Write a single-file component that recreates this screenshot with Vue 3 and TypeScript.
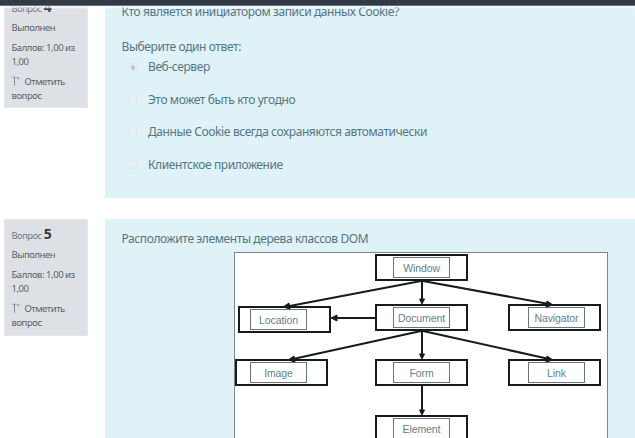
<script setup lang="ts">
interface DomNode {
  label: string
  x: number
  y: number
  slotX: number
  slotY: number
}

interface Arrow {
  line: string
  head: string
}

const answers: { text: string; checked: boolean }[] = [
  { text: 'Веб-сервер', checked: true },
  { text: 'Это может быть кто угодно', checked: false },
  { text: 'Данные Cookie всегда сохраняются автоматически', checked: false },
  { text: 'Клиентское приложение', checked: false },
]

const nodes: DomNode[] = [
  { label: 'Window', x: 140, y: 0.5, slotX: 16, slotY: 1 },
  { label: 'Location', x: 3, y: 53, slotX: 10, slotY: 1 },
  { label: 'Document', x: 140, y: 51, slotX: 16, slotY: 1 },
  { label: 'Navigator', x: 273, y: 51, slotX: 18, slotY: 1 },
  { label: 'Image', x: 0, y: 106, slotX: 13, slotY: 1 },
  { label: 'Form', x: 140, y: 106, slotX: 16, slotY: 1 },
  { label: 'Link', x: 273, y: 106, slotX: 18, slotY: 1 },
  { label: 'Element', x: 140, y: 162, slotX: 16, slotY: 1 },
]

const arrows: Arrow[] = [
  { line: 'M186 28L52 53.5', head: 'M48 54l6-4 1 6z' },
  { line: 'M187 28V48', head: 'M187 51l-2.5-5h5z' },
  { line: 'M188 28L314 51', head: 'M318 52l-6-4-1 6z' },
  { line: 'M140 65H101', head: 'M96 65l6-3v6z' },
  { line: 'M186 78L58 106', head: 'M53 107l6-4 1 6z' },
  { line: 'M187 78V103', head: 'M187 106l-2.5-5h5z' },
  { line: 'M188 78L314 106', head: 'M318 107l-6-4-1 6z' },
  { line: 'M187 133V159', head: 'M187 162l-2.5-5h5z' },
]

const questions = [4, 5]
</script>

<template>
  <div class="page">
    <header class="navbar"></header>
    <main class="quiz">
      <section v-for="n in questions" :key="n" class="question">
        <aside class="info">
          <h3 class="no">Вопрос <b>{{ n }}</b></h3>
          <p class="state">Выполнен</p>
          <p class="grade">Баллов: 1,00 из 1,00</p>
          <p class="flag">
            <svg class="flag-icon" viewBox="0 0 8 10">
              <path d="M2.5 1.5V9.5" />
              <path d="M0.5 1.3H3.5M4.5 1.8H6.8V3.4" />
            </svg>Отметить вопрос
          </p>
        </aside>

        <div v-if="n === 4" class="body">
          <p class="text">Кто является инициатором записи данных Cookie?</p>
          <p class="prompt">Выберите один ответ:</p>
          <ul class="answers">
            <li v-for="a in answers" :key="a.text" class="answer">
              <span class="radio" :class="{ checked: a.checked }"></span>
              <span>{{ a.text }}</span>
            </li>
          </ul>
        </div>

        <div v-else class="body tall">
          <p class="dom-title">Расположите элементы дерева классов DOM</p>
          <div class="diagram">
            <div
              v-for="node in nodes"
              :key="node.label"
              class="node"
              :style="{ left: node.x + 'px', top: node.y + 'px', paddingLeft: node.slotX + 'px', paddingTop: node.slotY + 'px' }"
            >
              <span class="slot">{{ node.label }}</span>
            </div>
            <svg class="arrows" viewBox="0 0 372 186">
              <g v-for="a in arrows" :key="a.line">
                <path class="line" :d="a.line" />
                <path class="head" :d="a.head" />
              </g>
            </svg>
          </div>
        </div>
      </section>
    </main>
  </div>
</template>

<style>
body {
  margin: 0;
  background: #fff;
}
</style>

<style scoped>
.page {
  position: relative;
  width: 635px;
  height: 438px;
  overflow: hidden;
  color: #57757f;
  font-family: "Noto Sans", "Open Sans", sans-serif;
}
.navbar {
  position: absolute;
  z-index: 2;
  top: 0;
  left: 0;
  box-sizing: border-box;
  width: 100%;
  height: 6px;
  background: #323a45;
  border-bottom: 1px solid #65737d;
  box-shadow: 0 2px 2px rgba(255, 255, 255, 0.75);
}
.quiz {
  display: flex;
  flex-direction: column;
  gap: 21px;
  margin-top: -8px;
}
.question {
  display: flex;
  align-items: flex-start;
  padding-left: 4px;
  gap: 17px;
}
p, h3, ul {
  margin: 0;
  padding: 0;
}
.info {
  box-sizing: border-box;
  flex: none;
  width: 84px;
  height: 116px;
  padding: 5px 5px 0 6.5px;
  border: 1px solid #e3e6ea;
  background: #dde1e6;
  color: #5b6165;
  font-size: 9.5px;
  letter-spacing: -0.46px;
  line-height: 14px;
}
.no {
  height: 20px;
  font-size: 9.3px;
  font-weight: 400;
  line-height: 18px;
  color: #73797e;
}
.no b {
  color: #343a40;
  font-size: 14px;
  line-height: 17px;
}
.state {
  margin-top: 2.5px;
}
.grade {
  margin-top: 6px;
}
.flag {
  margin-top: 6px;
}
.flag-icon {
  width: 8px;
  height: 10px;
  margin-right: 5px;
  vertical-align: -1px;
  fill: none;
  stroke: #858b92;
  stroke-width: 1;
}
.body {
  box-sizing: border-box;
  flex: 1;
  height: 206px;
  padding: 11px 17px 0 16.5px;
  background: #def2f8;
  font-size: 12px;
  letter-spacing: -0.4px;
  line-height: 18px;
}
.question + .question .info {
  height: 117px;
}
.body.tall {
  height: 230px;
}
.prompt {
  margin-top: 17px;
}
.answers {
  list-style: none;
}
.answer {
  display: flex;
  align-items: center;
  height: 18px;
  margin: 2px 0 14.7px;
}
.radio {
  box-sizing: border-box;
  display: flex;
  align-items: center;
  justify-content: center;
  width: 11px;
  height: 10px;
  margin: 0 10px 0 5.5px;
  border: 1px solid #dde9f0;
  border-radius: 5px;
  background: #e6edf5;
}
.radio.checked::after {
  content: "";
  width: 4px;
  height: 5px;
  border-radius: 50%;
  background: #bac5d2;
}
.diagram {
  position: relative;
  width: 372px;
  height: 186px;
  margin: 4px 0 0 112.5px;
  border: 1px solid #7e8588;
  border-bottom: 0;
  background: #fff;
}
.node {
  position: absolute;
  box-sizing: border-box;
  width: 93px;
  height: 27px;
  border: 2px solid #171b1d;
}
.slot {
  display: block;
  box-sizing: border-box;
  width: 57px;
  height: 21px;
  border: 1px solid #6c7477;
  color: #648185;
  font-family: "Liberation Sans", Arial, sans-serif;
  font-size: 10.5px;
  letter-spacing: -0.1px;
  line-height: 20px;
  text-align: center;
}
.arrows {
  position: absolute;
  top: 0;
  left: 0;
  width: 372px;
  height: 186px;
}
.line {
  fill: none;
  stroke: #171b1d;
  stroke-width: 2;
}
.head {
  fill: #171b1d;
  stroke: #171b1d;
}
</style>
